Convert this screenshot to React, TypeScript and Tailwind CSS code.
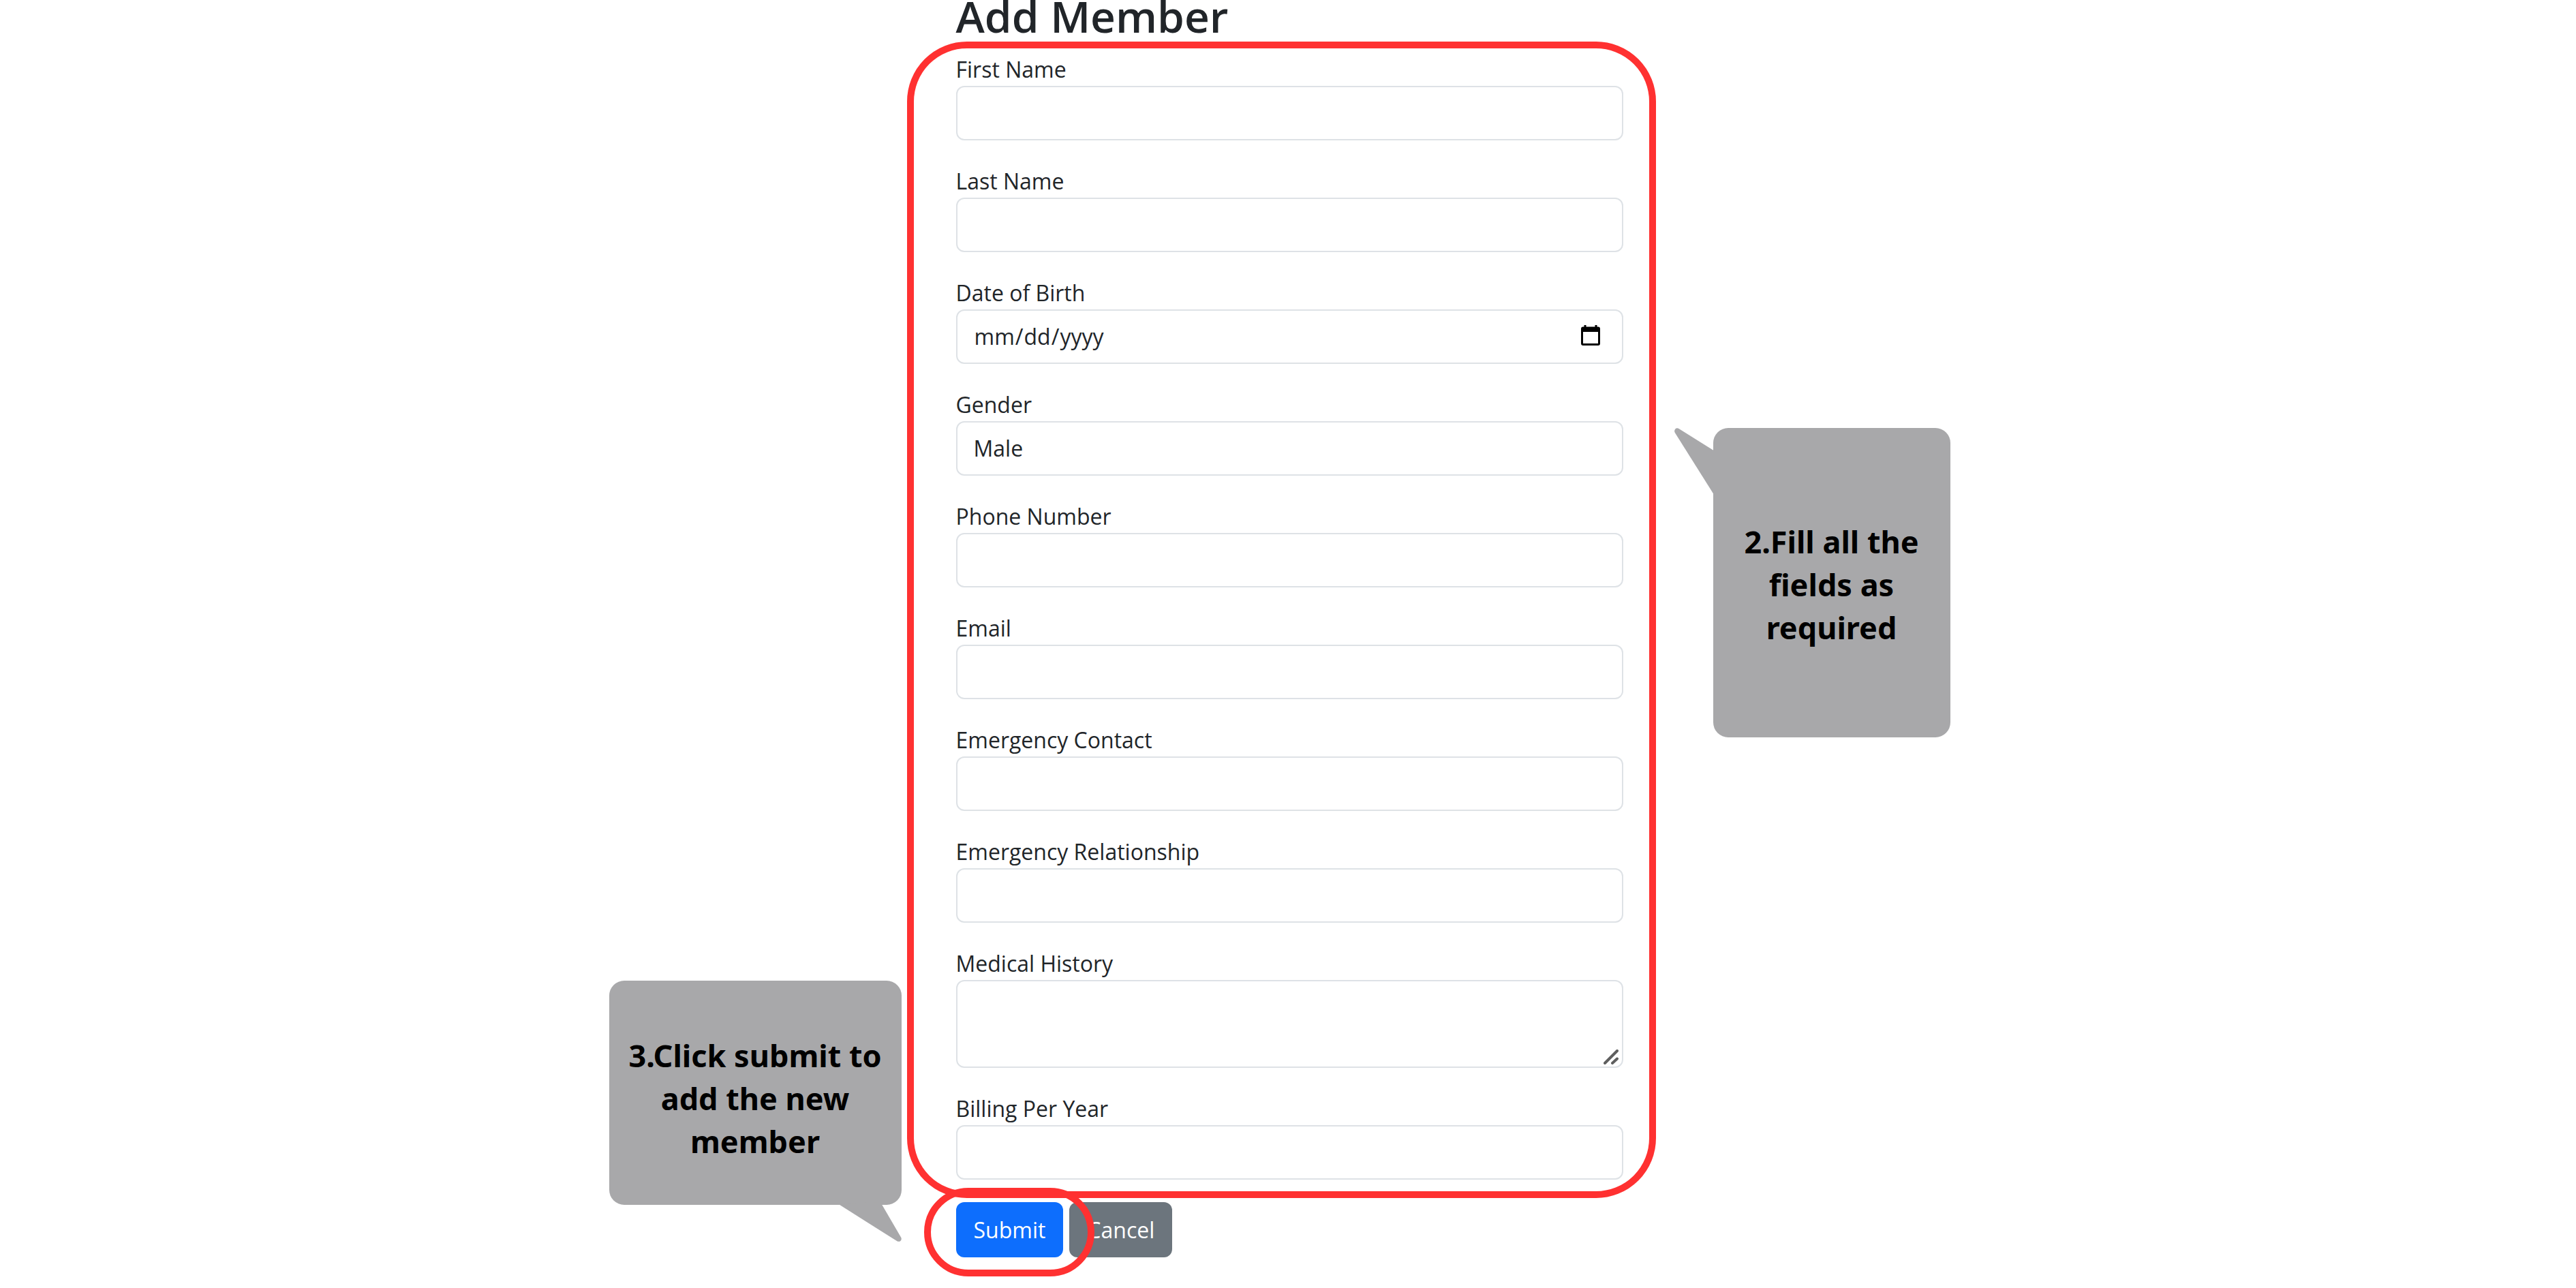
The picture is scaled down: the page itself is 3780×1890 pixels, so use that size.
import type { ReactNode } from "react";

const control =
  "block w-full h-20 rounded-xl border-2 border-[#dee2e6] bg-white px-6 text-[32px] leading-[52px] text-[#212529] outline-none focus:border-[#86b7fe]";

function Field({ id, label, children }: { id: string; label: string; children?: ReactNode }) {
  return (
    <div>
      <label htmlFor={id} className="block pt-1.5 text-[32px] leading-[48px]">
        {label}
      </label>
      {children ?? <input id={id} name={id} type="text" className={control} />}
    </div>
  );
}

function CalendarIcon() {
  return (
    <svg viewBox="0 0 28 31" className="pointer-events-none absolute top-[22px] right-[34px] h-[31px] w-7" aria-hidden="true">
      <path
        fill="#000"
        fillRule="evenodd"
        d="M4.500 1h3v2.500h13V1h3v2.500H25a3 3 0 0 1 3 3V28a3 3 0 0 1-3 3H3a3 3 0 0 1-3-3V6.500a3 3 0 0 1 3-3h1.500zM3 11v17h22V11z"
      />
    </svg>
  );
}

function ResizeGrip() {
  return (
    <svg viewBox="0 0 22 22" className="pointer-events-none absolute right-[7px] bottom-[5px] size-[22px]" aria-hidden="true">
      <path d="M2 20 20 2M13 20l7-6.500" stroke="#5f5f5f" strokeWidth="4" strokeLinecap="round" fill="none" />
    </svg>
  );
}

export default function App() {
  return (
    <div className="min-h-screen overflow-x-hidden bg-white pl-1 font-['Open_Sans','Noto_Sans',sans-serif] text-[#212529]">
      <main className="relative mx-auto w-full max-w-[979px]">
        <h1 className="mb-6 text-[64px] leading-[48px] font-semibold">Add Member</h1>

        <form onSubmit={(e) => e.preventDefault()}>
          <div className="relative flex flex-col gap-[30px]">
            <Field id="first-name" label="First Name" />
            <Field id="last-name" label="Last Name" />
            <Field id="birth-date" label="Date of Birth">
              <div className="relative">
                <input
                  id="birth-date"
                  name="birth-date"
                  type="date"
                  className={`${control} [&::-webkit-calendar-picker-indicator]:opacity-0`}
                />
                <CalendarIcon />
              </div>
            </Field>
            <Field id="gender" label="Gender">
              <select id="gender" name="gender" defaultValue="Male" className={`${control} appearance-none`}>
                <option>Male</option>
                <option>Female</option>
                <option>Other</option>
              </select>
            </Field>
            <Field id="phone" label="Phone Number" />
            <Field id="email" label="Email" />
            <Field id="emergency-contact" label="Emergency Contact" />
            <Field id="emergency-relationship" label="Emergency Relationship" />
            <Field id="medical-history" label="Medical History">
              <div className="relative">
                <textarea
                  id="medical-history"
                  name="medical-history"
                  className="block h-[129px] w-full resize-none rounded-xl border-2 border-[#dee2e6] bg-white px-6 py-3 text-[32px] leading-[52px] outline-none"
                />
                <ResizeGrip />
              </div>
            </Field>
            <Field id="billing" label="Billing Per Year" />

            <div className="pointer-events-none absolute -top-[11px] -right-12 -bottom-[27px] -left-[72px] rounded-[88px] border-[10px] border-[#ff3131]" />
          </div>

          <div className="mt-[33px] flex gap-[9px] text-[32px] leading-[52px] text-white">
            <div className="relative">
              <button type="submit" className="h-[81px] rounded-xl bg-[#0d6efd] px-[26px]">
                Submit
              </button>
              <div className="pointer-events-none absolute -top-[21px] -left-[47px] z-10 h-[130px] w-[250px] rounded-full border-[10px] border-[#ff3131]" />
            </div>
            <button type="button" className="h-[81px] rounded-xl bg-[#6c757d] px-[26px]">
              Cancel
            </button>
          </div>
        </form>

        <aside className="absolute top-[628px] left-[1111px] flex h-[454px] w-[348px] items-center justify-center rounded-[22px] bg-[#a8a8aa] px-6 pt-1 text-center font-['Noto_Sans',sans-serif] text-[45px] leading-[63px] font-bold text-black">
          <svg viewBox="0 0 60 100" className="absolute top-0 -left-[57px] h-[100px] w-[60px]" aria-hidden="true">
            <path d="M60 34.500 6.500 1C2.500-1.500-1.500 3 .8 7L60 101z" fill="#a8a8aa" />
          </svg>
          <p>
            2.Fill all the
            <br />
            fields as
            <br />
            required
          </p>
        </aside>

        <aside className="absolute top-[1439px] -left-[509px] flex h-[329px] w-[429px] items-center justify-center rounded-[22px] bg-[#a8a8aa] pt-4 text-center font-['Noto_Sans',sans-serif] text-[45px] leading-[63px] font-bold text-black">
          <svg viewBox="0 0 94 58" className="absolute right-0 -bottom-[54px] h-[58px] w-[94px]" aria-hidden="true">
            <path d="M0 2 87 57c4 2.500 8-1 6.300-5L63 0z" fill="#a8a8aa" />
          </svg>
          <p>
            3.Click submit to
            <br />
            add the new
            <br />
            member
          </p>
        </aside>
      </main>
    </div>
  );
}
